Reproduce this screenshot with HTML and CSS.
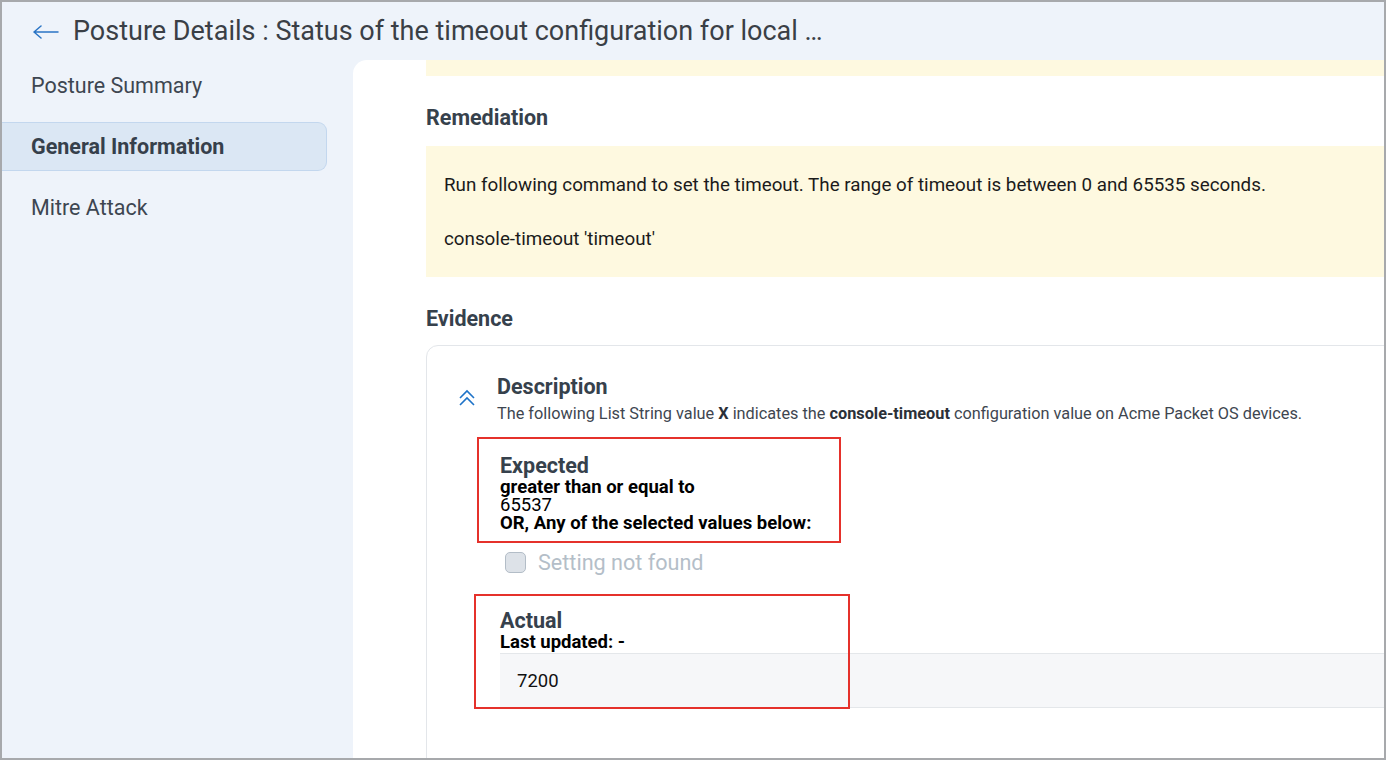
FILE: index.html
```html
<!DOCTYPE html>
<html lang="en">
<head>
<meta charset="utf-8">
<title>Posture Details</title>
<link rel="stylesheet" href="styles.css">
</head>
<body>
<div class="frame">
  <header class="topbar">
    <svg class="back" width="26" height="14" viewBox="0 0 26 14" aria-hidden="true">
      <path d="M1 7 H25 M1 7 L8 1 M1 7 L8 13" fill="none" stroke="#2a74c5" stroke-width="1.5" stroke-linecap="round" stroke-linejoin="round"/>
    </svg>
    <h1 class="title">Posture Details : Status of the timeout configuration for local …</h1>
  </header>
  <div class="layout">
    <nav class="sidebar">
      <div class="nav-item">Posture Summary</div>
      <div class="nav-item active">General Information</div>
      <div class="nav-item">Mitre Attack</div>
    </nav>
    <main class="panel">
      <div class="strip"></div>
      <h2 class="section-title">Remediation</h2>
      <div class="note">
        <p>Run following command to set the timeout. The range of timeout is between 0 and 65535 seconds.</p>
        <p>console-timeout 'timeout'</p>
      </div>
      <h2 class="section-title evidence-title">Evidence</h2>
      <section class="card">
        <div class="desc-row">
          <svg class="chev" width="18" height="18" viewBox="0 0 18 18" aria-hidden="true">
            <path d="M2 9 L9 2 L16 9 M2 16 L9 9 L16 16" fill="none" stroke="#1e73c8" stroke-width="1.6"/>
          </svg>
          <div>
            <h3 class="sub-title">Description</h3>
            <p class="desc">The following List String value <b>X</b> indicates the <b>console-timeout</b> configuration value on Acme Packet OS devices.</p>
          </div>
        </div>
        <div class="expected">
          <h4 class="sub-title small">Expected</h4>
          <div class="line bold">greater than or equal to</div>
          <div class="line">65537</div>
          <div class="line bold">OR, Any of the selected values below:</div>
        </div>
        <label class="check-row">
          <span class="checkbox"></span>
          <span class="check-label">Setting not found</span>
        </label>
        <div class="actual">
          <h4 class="sub-title small">Actual</h4>
          <div class="line bold">Last updated: -</div>
          <div class="value-box">7200</div>
        </div>
        <div class="mark mark-expected"></div>
        <div class="mark mark-actual"></div>
      </section>
    </main>
  </div>
</div>
</body>
</html>
```

FILE: styles.css
```css
html, body {
  margin: 0;
  padding: 0;
}

body {
  font-family: Roboto, "Liberation Sans", Arial, sans-serif;
}

.frame {
  width: 1386px;
  height: 760px;
  box-sizing: border-box;
  border: 2px solid #a7a9ac;
  background: #eef3fa;
  overflow: hidden;
  display: flex;
  flex-direction: column;
}

.topbar {
  height: 58px;
  flex: none;
  display: flex;
  align-items: center;
  gap: 14px;
  padding-left: 31px;
}

.back {
  display: block;
  margin-top: 1px;
}

.title {
  margin: 0;
  font-size: 27px;
  font-weight: 400;
  color: #3a3f46;
  white-space: nowrap;
  line-height: 32px;
}

.layout {
  display: flex;
  flex: 1;
  min-height: 0;
}

.sidebar {
  width: 351px;
  flex: none;
  padding-top: 1px;
  display: flex;
  flex-direction: column;
  gap: 12px;
}

.nav-item {
  width: 325px;
  height: 49px;
  box-sizing: border-box;
  display: flex;
  align-items: center;
  padding-left: 29px;
  font-size: 21.5px;
  color: #3d4651;
}

.nav-item.active {
  background: #dbe7f4;
  border: 1px solid #c3d7ee;
  border-left: none;
  border-radius: 0 9px 9px 0;
  font-weight: 700;
  color: #36404b;
}

.panel {
  flex: 1;
  min-width: 0;
  background: #ffffff;
  border-top-left-radius: 14px;
  padding-left: 73px;
}

.strip {
  height: 16px;
  background: #fef9e0;
}

.section-title {
  margin: 29px 0 15px;
  font-size: 21.5px;
  line-height: 26px;
  font-weight: 700;
  color: #36414c;
}

.evidence-title {
  margin-bottom: 13px;
}

.note {
  background: #fef9e0;
  padding: 27px 18px 26px;
  font-size: 18.8px;
  line-height: 24px;
  color: #1b1b1b;
  display: flex;
  flex-direction: column;
  gap: 30px;
}

.note p {
  margin: 0;
}

.card {
  position: relative;
  margin-right: -40px;
  height: 420px;
  border: 1px solid #e3e6ea;
  border-radius: 12px 12px 0 0;
  padding: 28px 0 0 31px;
}

.desc-row {
  display: flex;
  gap: 21px;
}

.chev {
  display: block;
  flex: none;
  margin-top: 15px;
}

.sub-title {
  margin: 0;
  font-size: 21.5px;
  line-height: 26px;
  font-weight: 700;
  color: #36414c;
}

.sub-title.small {
  line-height: 24px;
}

.desc {
  margin: 4px 0 0;
  font-size: 16.3px;
  line-height: 20px;
  color: #3e4650;
}

.desc b {
  color: #2b3038;
}

.expected {
  margin: 30px 0 0 42px;
}

.line {
  font-size: 18.5px;
  line-height: 18px;
  color: #000000;
}

.line.bold {
  font-weight: 700;
}

.check-row {
  display: flex;
  align-items: center;
  gap: 12px;
  margin: 20px 0 0 47px;
  height: 21px;
}

.checkbox {
  width: 21px;
  height: 21px;
  box-sizing: border-box;
  border: 1px solid #b3bdc7;
  border-radius: 5px;
  background: #dde2e8;
}

.check-label {
  font-size: 21.6px;
  line-height: 21px;
  color: #b4bec8;
}

.actual {
  margin: 36px 0 0 42px;
}

.value-box {
  margin-top: 2px;
  height: 55px;
  box-sizing: border-box;
  border-top: 1px solid #e4e7ea;
  border-bottom: 1px solid #e4e7ea;
  background: #f6f7f9;
  display: flex;
  align-items: center;
  padding-left: 17px;
  font-size: 18.5px;
  color: #111111;
}

.mark {
  position: absolute;
  box-sizing: border-box;
  border: 2px solid #e5312b;
  pointer-events: none;
}

.mark-expected {
  left: 50px;
  top: 91px;
  width: 364px;
  height: 106px;
}

.mark-actual {
  left: 47px;
  top: 248px;
  width: 376px;
  height: 115px;
}
```
